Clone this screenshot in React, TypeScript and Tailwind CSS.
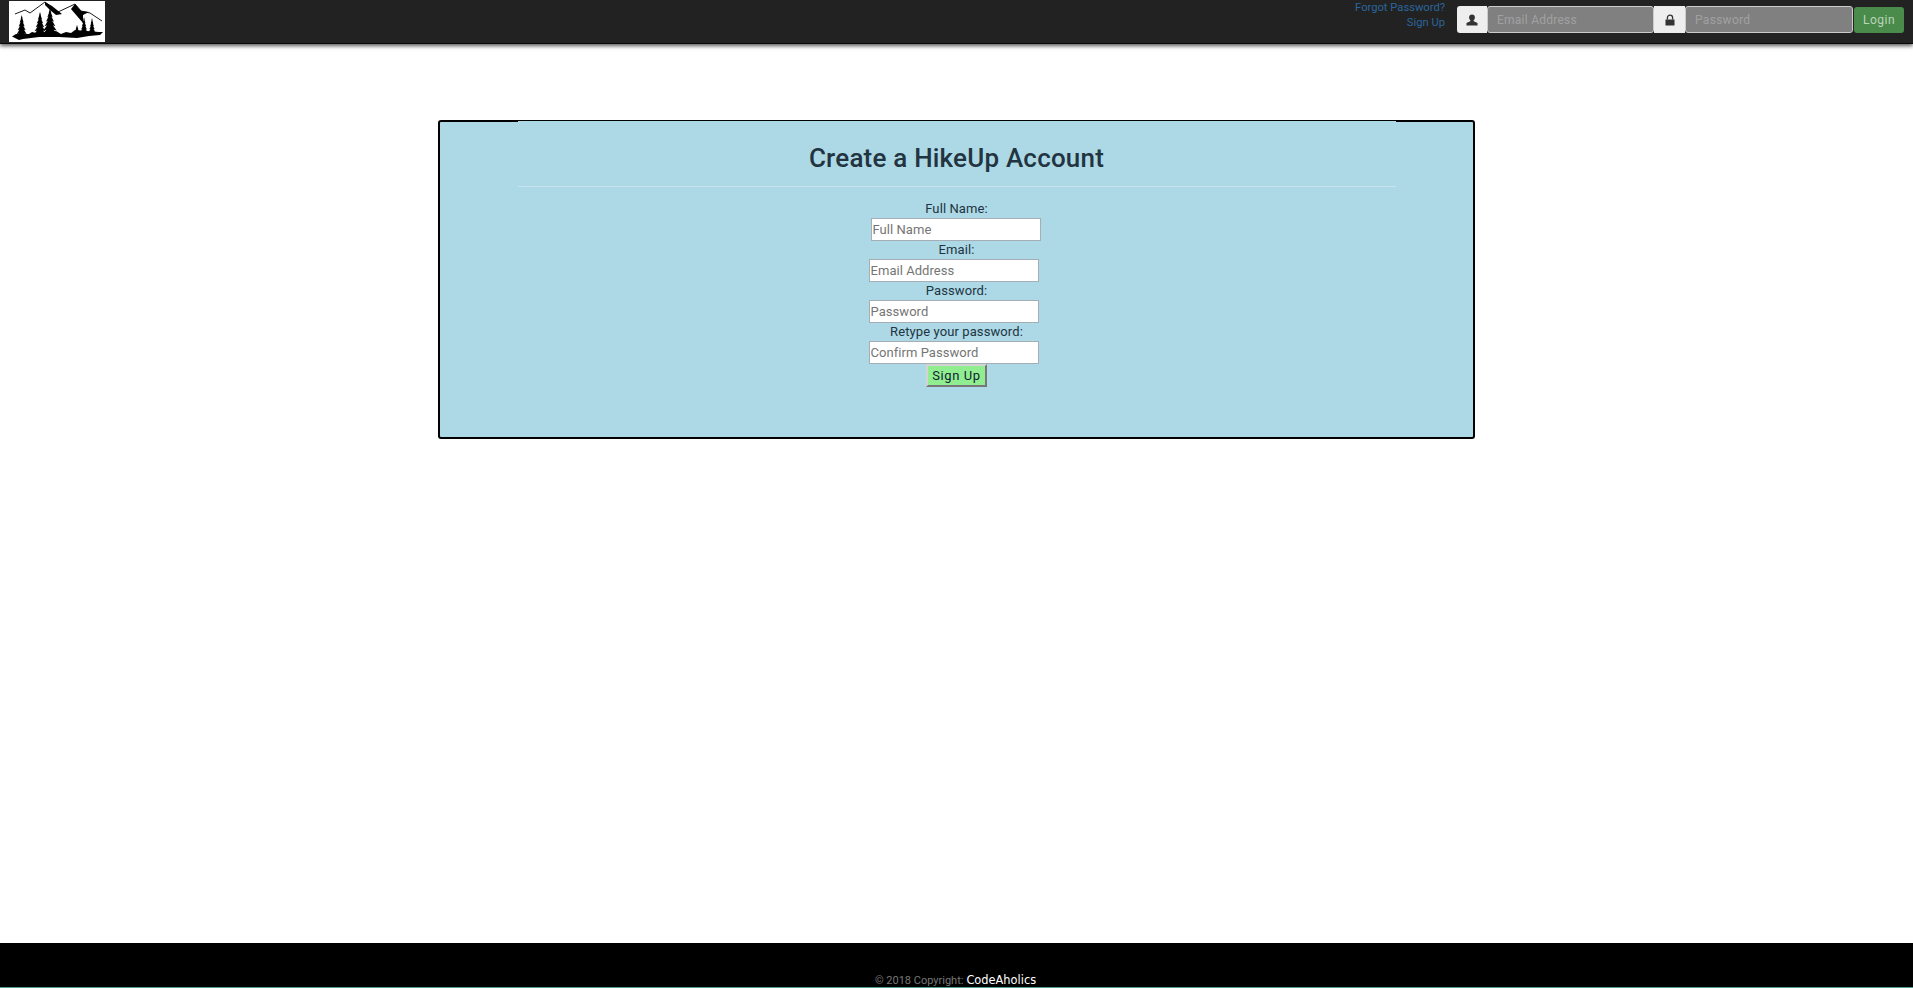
const inputClass =
  "h-[23px] w-[170px] border border-[#a5aeb4] bg-white px-px font-['Roboto',sans-serif] text-[13px] tracking-[0.05px] text-[#333] placeholder:text-[#757575]";
const labelClass =
  "h-[18px] font-['Roboto',sans-serif] text-[13px] leading-[18px] tracking-[0.1px] text-[#21343f]";

// jagged pine silhouette, returned as a polygon path
function treePath(cx: number, top: number, bottom: number, halfWidth: number) {
  const tiers = 6;
  const step = (bottom - top) / tiers;
  const right: string[] = [];
  const left: string[] = [];
  for (let i = 1; i <= tiers; i++) {
    const w = (halfWidth * i) / tiers;
    const y = top + step * i;
    right.push(`L${cx + w} ${y} L${cx + w * 0.55} ${y - step * 0.2}`);
    left.unshift(`L${cx - w * 0.55} ${y - step * 0.2} L${cx - w} ${y}`);
  }
  return `M${cx} ${top} ${right.join(" ")} ${left.join(" ")} Z`;
}

const trees = [
  [12.7, 14, 37, 6],
  [31, 11, 34, 6.5],
  [41, 7.5, 34, 8],
  [68, 24, 36, 4],
  [75, 16, 35, 4.5],
  [83, 17, 34, 4],
];

function Logo() {
  return (
    <svg width="96" height="41" viewBox="0 0 96 41" className="bg-white">
      {/* ridge line */}
      <path
        d="M6 13 L16 9 L21 12 L36 1 L46 9 L52 13 M49 11 L66 3 L72 10 L81 12 L93 20"
        fill="none"
        stroke="#000"
        strokeWidth="0.9"
      />
      {/* peak shadows */}
      <path d="M36 1 L43 5 L53 13 L47 14 L41 9 L36 4 Z" fill="#000" />
      <path d="M66 3 L72 10 L80 11 L74 14 L74 22 L68 15 L62 8 Z" fill="#000" />
      {trees.map(([cx, top, bottom, hw]) => (
        <path key={cx} d={treePath(cx, top, bottom, hw)} fill="#000" />
      ))}
      {/* tree line along the ground */}
      <path
        d="M3 35.5 L7 33 L20 33 L23 31 L27 32 L35 32 L47 30 L52 33 L57 31 L62 32 L66 29 L90 31 L94 31 L91 34 L80 35 L68 37 L50 36 L30 36 L14 38 L10 39 Z"
        fill="#000"
      />
    </svg>
  );
}

function UserGlyph() {
  return (
    <svg width="12" height="12" viewBox="0 0 12 12" fill="#333">
      <circle cx="6" cy="3.4" r="2.9" />
      <path d="M4.6 5.5h2.8l.4 1.7L11.5 9v2.5H.5V9l3.7-1.8z" />
    </svg>
  );
}

function LockGlyph() {
  return (
    <svg width="12" height="12" viewBox="0 0 12 12" fill="#333">
      <path d="M1.5 5.5h9v6h-9z" />
      <path d="M3.4 5.5V3.8a2.6 2.6 0 0 1 5.2 0v1.7" fill="none" stroke="#333" strokeWidth="1.3" />
    </svg>
  );
}

export default function App() {
  return (
    <div className="flex h-[988px] flex-col overflow-hidden bg-white font-['Roboto',sans-serif]">
      {/* Navbar */}
      <nav className="flex h-[44px] shrink-0 items-start justify-between border-b border-[#080808] bg-[#222] px-[9px] pt-px shadow-[0_2px_4px_rgba(0,0,0,0.65)]">
        <Logo />
        <div className="flex items-start">
          <div className="mr-[12px] -mt-px flex flex-col items-end text-[11.2px] leading-[15px] text-[#2a659c]">
            <a>Forgot Password?</a>
            <a>Sign Up</a>
          </div>
          <div className="mt-[5px] flex h-[27px]">
            <span className="flex w-[30px] items-center justify-center rounded-l-[3px] bg-[#eee]">
              <UserGlyph />
            </span>
            <input
              placeholder="Email Address"
              className="w-[167px] rounded-[3px] border border-[#ccc] bg-[#808080] pl-[9px] text-[12px] tracking-[0.25px] placeholder:text-[#a0a0a0]"
            />
            <span className="flex w-[31px] items-center justify-center bg-[#eee]">
              <LockGlyph />
            </span>
            <input
              placeholder="Password"
              className="w-[168px] rounded-[3px] border border-[#ccc] bg-[#808080] pl-[9px] text-[12px] tracking-[0.3px] placeholder:text-[#a0a0a0]"
            />
            <button className="ml-px mt-px h-[26px] w-[50px] rounded-[3px] bg-[#4a8a4a] text-[12px] tracking-[0.5px] text-[#b9d6b9]">
              Login
            </button>
          </div>
        </div>
      </nav>

      {/* Main */}
      <main className="flex-1 pt-[76px]">
        <div className="mx-auto h-[319px] w-[1037px] rounded-[3px] border-2 border-black bg-[#add8e6]">
          <div className="mx-auto -mt-px w-[878px] bg-[#add8e6] pt-[22px]">
            <h1 className="text-center font-['Roboto',sans-serif] text-[26px] font-medium leading-[31px] tracking-[0.2px] text-[#22343f]">
              Create a HikeUp Account
            </h1>
            <div className="mt-[12px] h-px bg-[#c8e4ee]" />
            <form className="mt-[13px] flex flex-col items-center">
              <label className={labelClass}>Full Name:</label>
              <input placeholder="Full Name" className={`${inputClass} mr-[2px]`} />
              <label className={labelClass}>Email:</label>
              <input placeholder="Email Address" className={`${inputClass} mr-[6px]`} />
              <label className={labelClass}>Password:</label>
              <input placeholder="Password" className={`${inputClass} mr-[6px]`} />
              <label className={labelClass}>Retype your password:</label>
              <input placeholder="Confirm Password" className={`${inputClass} mr-[6px]`} />
              <button
                type="button"
                className="h-[23px] w-[61px] border-2 border-t-[#d3d3d3] border-l-[#d3d3d3] border-r-[#777] border-b-[#777] bg-[#90ee90] font-['Roboto',sans-serif] text-[13px] leading-none tracking-[0.6px] text-[#123]"
              >
                Sign Up
              </button>
            </form>
          </div>
        </div>
      </main>

      {/* Footer */}
      <footer className="flex h-[45px] shrink-0 items-end justify-center border-b border-[#4f9e8f] bg-black pr-[2px]">
        <span className="text-[11px] leading-[13px] text-[#777]">© 2018 Copyright:</span>
        <span className="ml-[3px] font-['DejaVu_Sans',sans-serif] text-[11.4px] leading-[13px] text-white">
          CodeAholics
        </span>
      </footer>
    </div>
  );
}
